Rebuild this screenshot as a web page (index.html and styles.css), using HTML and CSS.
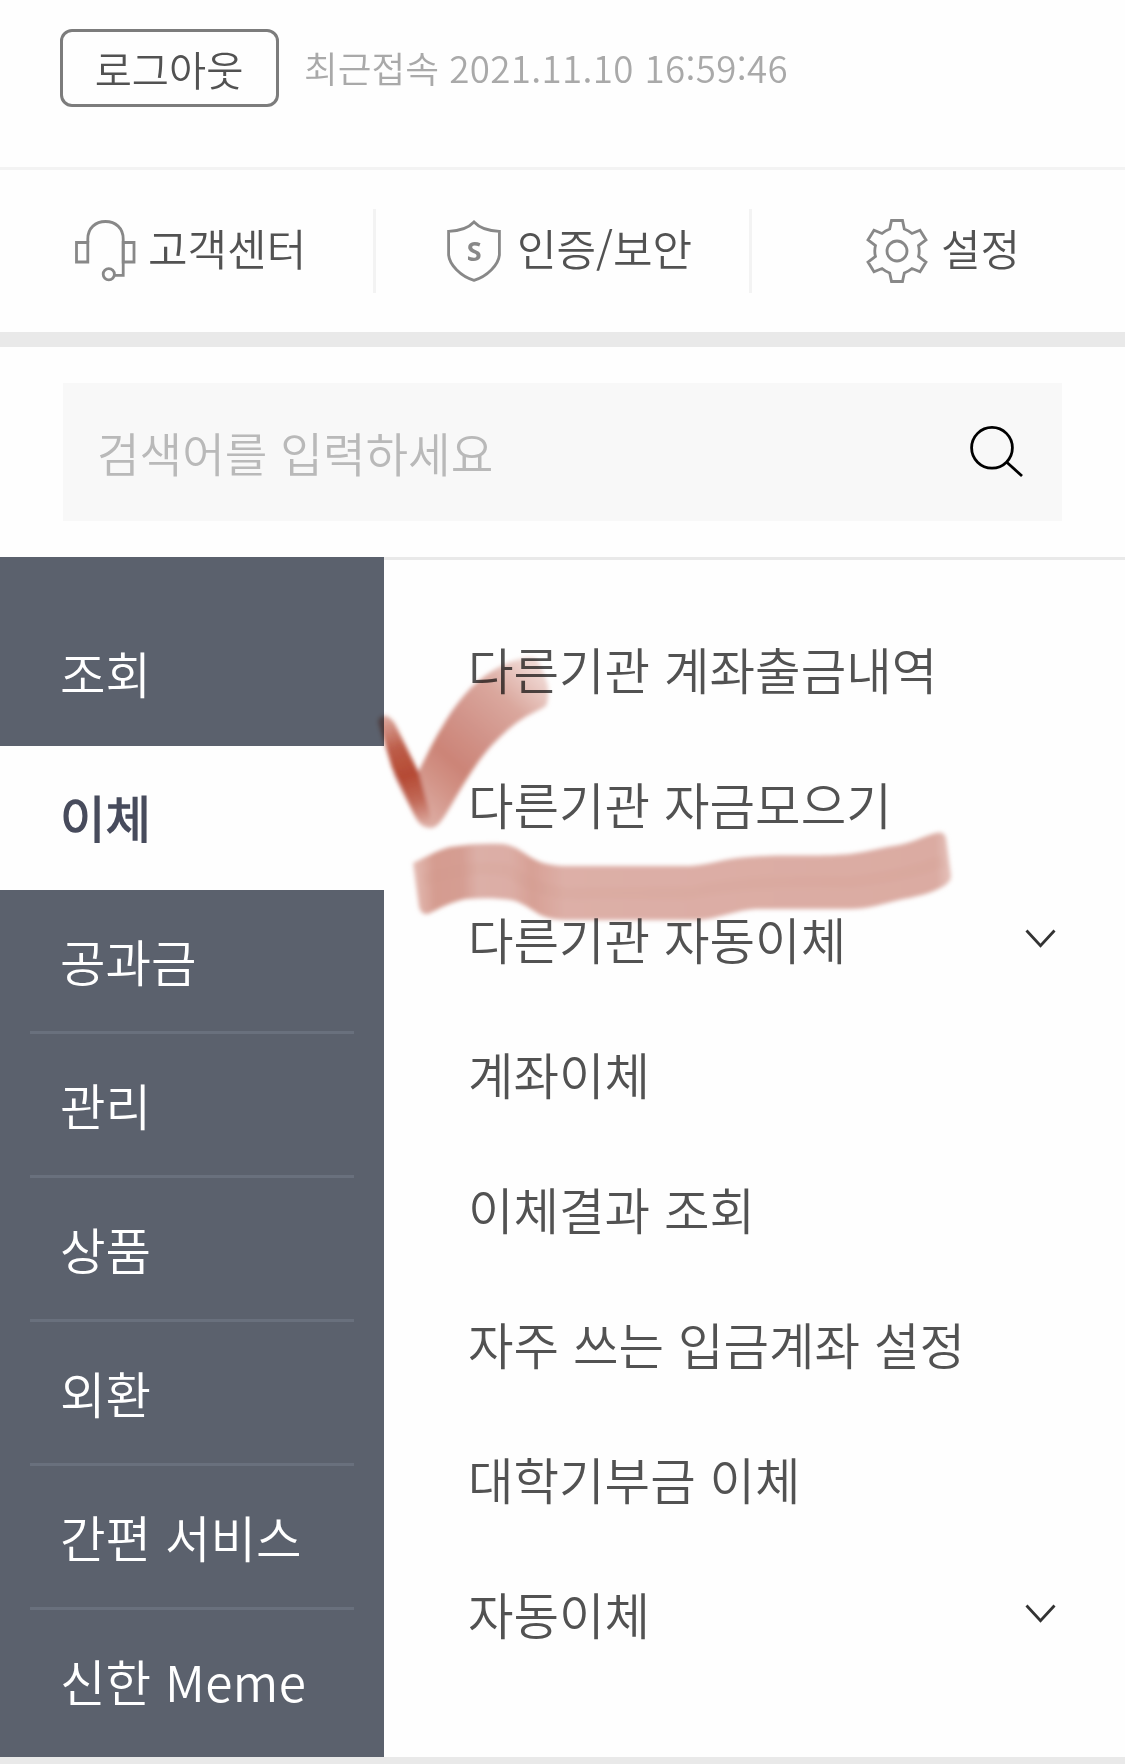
FILE: index.html
```html
<!DOCTYPE html>
<html lang="ko">
<head>
<meta charset="utf-8">
<title>전체메뉴</title>
<link rel="stylesheet" href="styles.css">
</head>
<body>
<div class="page">
  <header class="account">
    <button class="logout">로그아웃</button>
    <span class="last-login">최근접속 <span class="timestamp">2021.11.10 16:59:46</span></span>
  </header>
  <nav class="quick">
    <a class="quick-item support">
      <svg width="61" height="62" viewBox="0 0 61 62" fill="none" stroke="#888" stroke-width="2.8"><path d="M12.800 22.500V19C12.800 8 20.500 1.500 30.500 1.500S48.200 8 48.200 19V55.300H39"/><path d="M1.500 22.500H12.800V42H1.500ZM48.200 22.500H59V42H48.200Z"/><circle cx="33.800" cy="54.300" r="5.600"/></svg>
      <span>고객센터</span>
    </a>
    <a class="quick-item security">
      <svg width="54" height="62" viewBox="0 0 54 62"><path d="M27 2C21 8.500 12 11 1.600 11.300V35C2.500 45 14 56.500 27 60.300C40 56.500 51.500 45 52.400 35V11.300C42 11 33 8.500 27 2Z" fill="none" stroke="#888" stroke-width="2.800"/><text x="27.300" y="40.500" text-anchor="middle" class="shield-mark">S</text></svg>
      <span>인증/보안</span>
    </a>
    <a class="quick-item settings">
      <svg width="62" height="64" viewBox="-31 -32 62 64" fill="none" stroke="#888" stroke-width="2.800"><path d="M-5.500-30.500H5.500L7.300-22Q11.500-20.500 15-17.500L23-20.800L29-11L21.500-5.500Q23 0 21.500 5.500L29 11L23 20.800L15 17.500Q11.500 20.500 7.300 22L5.500 30.500H-5.500L-7.300 22Q-11.500 20.500-15 17.500L-23 20.800L-29 11L-21.500 5.500Q-23 0-21.500-5.500L-29-11L-23-20.800L-15-17.500Q-11.500-20.500-7.300-22Z"/><circle r="10"/></svg>
      <span>설정</span>
    </a>
  </nav>
  <div class="search-wrap">
    <div class="search">
      <span>검색어를 입력하세요</span>
      <svg width="54" height="52" viewBox="0 0 54 52" fill="none" stroke="#000" stroke-width="2.800"><circle cx="22" cy="21.800" r="20.400"/><path d="M36.500 36L52 50"/></svg>
    </div>
  </div>
  <main class="menu">
    <ul class="categories">
      <li>조회</li>
      <li class="active">이체</li>
      <li>공과금</li>
      <li>관리</li>
      <li>상품</li>
      <li>외환</li>
      <li>간편 서비스</li>
      <li>신한 <span class="latin">Meme</span></li>
    </ul>
    <ul class="entries">
      <li>다른기관 계좌출금내역</li>
      <li>다른기관 자금모으기</li>
      <li>다른기관 자동이체<svg class="chevron" width="31" height="20" viewBox="0 0 31 20"><path d="M1.500 1.500L15.500 16.800L29.500 1.500"/></svg></li>
      <li>계좌이체</li>
      <li>이체결과 조회</li>
      <li>자주 쓰는 입금계좌 설정</li>
      <li>대학기부금 이체</li>
      <li>자동이체<svg class="chevron" width="31" height="20" viewBox="0 0 31 20"><path d="M1.500 1.500L15.500 16.800L29.500 1.500"/></svg></li>
    </ul>
  </main>
  <!-- hand-drawn marker strokes -->
  <svg class="marker" width="600" height="300" viewBox="370 640 600 300">
    <defs>
      <filter id="soft" x="-5%" y="-5%" width="110%" height="110%"><feGaussianBlur stdDeviation="2.2"/></filter>
      <linearGradient id="tick" gradientUnits="userSpaceOnUse" x1="425" y1="825" x2="550" y2="685"><stop offset="0" stop-color="#dfb0a7"/><stop offset=".2" stop-color="#d4968a"/><stop offset=".35" stop-color="#cd8577"/><stop offset=".55" stop-color="#d2948a"/><stop offset=".78" stop-color="#dba89e"/><stop offset="1" stop-color="#efd6d1"/></linearGradient>
      <linearGradient id="start" gradientUnits="userSpaceOnUse" x1="385" y1="715" x2="427" y2="825"><stop offset="0" stop-color="#b64a34" stop-opacity=".45"/><stop offset=".3" stop-color="#b64a34" stop-opacity=".9"/><stop offset=".55" stop-color="#b64a34"/><stop offset=".78" stop-color="#b64a34" stop-opacity=".65"/><stop offset="1" stop-color="#b64a34" stop-opacity="0"/></linearGradient>
      <linearGradient id="band" gradientUnits="userSpaceOnUse" x1="413" y1="875" x2="952" y2="860"><stop offset="0" stop-color="#e5bdb5"/><stop offset=".04" stop-color="#d69d91"/><stop offset=".09" stop-color="#d69e93"/><stop offset=".12" stop-color="#ddb0a8"/><stop offset=".18" stop-color="#ddaea6"/><stop offset=".22" stop-color="#d8a196"/><stop offset=".28" stop-color="#deb0a8"/><stop offset=".97" stop-color="#dcaca3"/><stop offset="1" stop-color="#e7c5be"/></linearGradient>
    </defs>
    <g filter="url(#soft)">
      <path fill="url(#tick)" d="M417 774C426 757 432 743 442 727C452 710 462 696 475 684C487 673 503 663 520 659Q532 655 537 660Q544 671 548 686Q549 700 546 706C536 712 525 716 515 724C502 734 490 746 479 761C468 776 459 792 449 809C442 821 437 828 430 828Q420 828 414 815C407 800 398 786 393 772Z"/>
      <path fill="url(#start)" d="M378 721Q381 714 387 716Q393 719 397 728L419 773L429 810Q432 822 428 824Q420 825 414 814L392 768Z"/>
      <path fill="url(#band)" d="M413 863C428 856 438 850 450 847C468 844 486 843 503 844C518 846 525 855 536 860C544 864 555 866 569 866H690C710 865 725 858 748 857C780 854 820 857 850 854C868 852 883 847 899 845C914 842 924 836 936 833Q944 831 946 838L951 875Q952 881 944 886C930 894 915 897 899 900C883 904 868 909 850 909H756C735 910 718 919 699 920H564C548 919 541 916 534 911C526 906 520 902 511 900C497 898 481 898 466 899C450 902 439 909 428 914Q421 915 419 907Z"/>
      <path d="M424 880Q470 864 508 870Q545 898 590 893H690Q750 879 850 882Q905 876 943 861" fill="none" stroke="#d49a8d" stroke-opacity=".13" stroke-width="12"/>
    </g>
  </svg>
</div>
</body>
</html>
```
FILE: styles.css
```css
* { box-sizing: border-box; }
body {
  margin: 0;
  background: #fefefe;
  color: #525252;
  font-family: "Noto Sans CJK KR DemiLight", "Noto Sans CJK KR", sans-serif;
  font-weight: 350;
}
ul { margin: 0; padding: 0; list-style: none; }
svg { display: block; flex: none; }
.page { position: relative; width: 1125px; height: 1764px; overflow: hidden; }
.account {
  display: flex;
  gap: 25px;
  height: 170px;
  padding: 29px 0 0 60px;
  border-bottom: 3px solid #f3f3f3;
}
.logout {
  width: 219px;
  height: 78px;
  padding: 0 1px 0 0;
  border: 3px solid #7c7c7c;
  border-radius: 12px;
  background: none;
  color: inherit;
  font: inherit;
  font-size: 40.400px;
  line-height: 69px;
}
.last-login { color: #a9a9a9; font-size: 36.700px; line-height: 76px; white-space: nowrap; }
.timestamp { letter-spacing: .36px; }
.quick {
  display: grid;
  grid-template-columns: 376px 376px 373px;
  height: 177px;
  padding: 39px 0;
  border-bottom: 15px solid #e9e9e9;
}
.quick-item {
  display: flex;
  align-items: center;
  gap: 12px;
  height: 84px;
  border-right: 3px solid #f3f3f3;
  font-size: 43px;
  line-height: 76px;
  white-space: nowrap;
}
.quick-item span { margin-bottom: 8px; }
.support { padding-left: 75px; }
.security { padding-left: 71px; gap: 16px; }
.settings { padding-left: 114px; gap: 13px; border-right: 0; }
.shield-mark { font: 700 27px "Open Sans", sans-serif; fill: #888; }
.search-wrap { height: 210px; padding: 36px 63px 0; }
.search {
  display: flex;
  align-items: center;
  justify-content: space-between;
  height: 138px;
  padding: 0 38px 0 34px;
  background: #f8f8f8;
  color: #b9b9b9;
  font-size: 46.300px;
  line-height: 138px;
}
.menu {
  display: grid;
  grid-template-columns: 384px 1fr;
  height: 1207px;
  border-bottom: 7px solid #e9e9e9;
  font-size: 49.500px;
  white-space: nowrap;
}
.categories { padding-top: 45px; background: #5b616d; color: #fff; }
.categories li {
  height: 144px;
  padding-left: 30px;
  margin: 0 30px;
  border-bottom: 3px solid #69707d;
  line-height: 142px;
}
.categories li:first-child, .categories li:last-child { border-bottom: 0; }
.categories .active {
  margin: 0;
  padding-left: 60px;
  border-bottom: 0;
  background: #fefefe;
  color: #474b5c;
  font-weight: 700;
}
.latin { letter-spacing: .4px; }
.entries { padding: 45px 69px 0 84px; border-top: 3px solid #e9e9e9; }
.entries li {
  display: flex;
  align-items: center;
  justify-content: space-between;
  height: 135px;
  padding-bottom: 7px;
  line-height: 128px;
}
.chevron { margin-bottom: 1px; fill: none; stroke: #333; stroke-width: 2.800; }
.marker { position: absolute; left: 370px; top: 640px; mix-blend-mode: multiply; }
```
